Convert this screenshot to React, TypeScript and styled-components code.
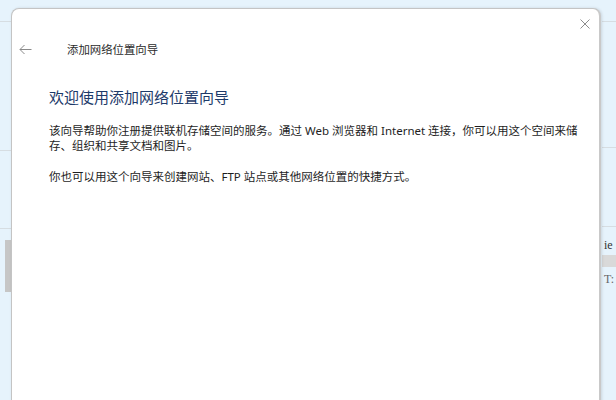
import styled, { createGlobalStyle } from 'styled-components';

const GlobalStyle = createGlobalStyle`
  html, body {
    margin: 0;
    padding: 0;
  }
  body {
    width: 616px;
    height: 400px;
    overflow: hidden;
    background: #e6f3fc;
    font-family: "Noto Sans", "Noto Sans CJK SC", sans-serif;
  }
`;

const BackIcon = () => (
  <svg width="13" height="11" viewBox="0 0 13 11" fill="none">
    <path d="M12.5 5.5H1M5.5 1L1 5.5L5.5 10" stroke="#8a8a8a" strokeWidth="1" />
  </svg>
);

const CloseIcon = () => (
  <svg width="10" height="10" viewBox="0 0 10 10" fill="none">
    <path d="M0.5 0.5L9.5 9.5M9.5 0.5L0.5 9.5" stroke="#8c8c8c" strokeWidth="1" />
  </svg>
);

const App = () => {
  return (
    <>
      <GlobalStyle />
      <Screen>
        <Backdrop>
          <SideColumn>
            <Rule top={21} />
            <Rule top={128} />
            <Rule top={77} />
            <ScrollThumb top={11} />
          </SideColumn>
          <span />
          <SideColumn>
            <Rule top={21} />
            <Rule top={125} />
            <Rule top={78} />
            <Fragment>ie</Fragment>
            <GrayBar />
            <Fragment>T:</Fragment>
          </SideColumn>
        </Backdrop>

        <Dialog>
          <TitleBar>
            <CloseButton>
              <CloseIcon />
            </CloseButton>
          </TitleBar>
          <NavRow>
            <BackButton>
              <BackIcon />
            </BackButton>
            <WindowTitle>添加网络位置向导</WindowTitle>
          </NavRow>
          <Content>
            <Heading>欢迎使用添加网络位置向导</Heading>
            <Paragraph>
              该向导帮助你注册提供联机存储空间的服务。通过 Web 浏览器和 Internet 连接，你可以用这个空间来储存、组织和共享文档和图片。
            </Paragraph>
            <Paragraph>你也可以用这个向导来创建网站、FTP 站点或其他网络位置的快捷方式。</Paragraph>
          </Content>
        </Dialog>
      </Screen>
    </>
  );
};

export default App;

const Screen = styled.div`
  position: relative;
  width: 616px;
  height: 400px;
  overflow: hidden;
`;

const Backdrop = styled.div`
  display: grid;
  grid-template-columns: 12px 1fr 14px;
  height: 400px;
`;

const SideColumn = styled.div`
  display: flex;
  flex-direction: column;
`;

const Rule = styled.div<{ top: number }>`
  margin-top: ${({ top }) => top}px;
  height: 1px;
  background: #d6dde2;
`;

const ScrollThumb = styled.div<{ top: number }>`
  margin-top: ${({ top }) => top}px;
  margin-left: 5px;
  width: 6px;
  height: 52px;
  background: #c6c6c6;
`;

const Fragment = styled.div`
  margin-top: 12px;
  margin-left: 2px;
  font-family: "Liberation Serif", serif;
  font-size: 12px;
  line-height: 12px;
  color: #333;
  white-space: nowrap;
  &:last-child {
    margin-top: 6px;
    color: #666;
  }
`;

const GrayBar = styled.div`
  margin-top: 4px;
  height: 12px;
  background: #d9d9d9;
`;

const Dialog = styled.div`
  position: absolute;
  left: 11px;
  top: 8px;
  width: 590px;
  height: 420px;
  box-sizing: border-box;
  background: #fff;
  border: 1px solid #c4c4c4;
  border-right: 2px solid #c9c9c9;
  border-radius: 8px 8px 0 0;
  box-shadow: 1px 0 3px rgba(0, 0, 0, 0.12);
  display: flex;
  flex-direction: column;
`;

const TitleBar = styled.div`
  height: 29px;
  display: flex;
  align-items: center;
  justify-content: flex-end;
  padding-right: 9px;
`;

const CloseButton = styled.div`
  display: flex;
  width: 10px;
  height: 10px;
`;

const NavRow = styled.div`
  height: 22px;
  display: flex;
  align-items: center;
  padding-left: 7px;
`;

const BackButton = styled.div`
  display: flex;
  width: 13px;
  margin-right: 35px;
`;

const WindowTitle = styled.span`
  font-size: 11.4px;
  color: #2b2b2b;
  font-family: "Noto Sans CJK SC", sans-serif;
`;

const Content = styled.div`
  padding-left: 37px;
  width: 534px;
`;

const Heading = styled.h1`
  margin: 27px 0 0;
  font-family: "Noto Sans CJK SC", sans-serif;
  font-size: 15px;
  line-height: 20px;
  font-weight: 400;
  color: #1d3a6a;
`;

const Paragraph = styled.p`
  margin: 16px 0 0;
  font-size: 11.5px;
  line-height: 15px;
  color: #1e1e1e;
  & + & {
    margin-top: 16px;
  }
`;
